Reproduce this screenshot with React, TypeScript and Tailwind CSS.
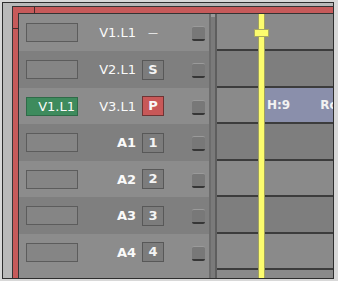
import React from 'react';

type Row = {
  label: string;
  tag: string;
  src?: string;
  dark: boolean;
  bold: boolean;
  h: 'h-[37px]' | 'h-[36px]';
};

const rows: Row[] = [
  { label: 'V1.L1', tag: '—', dark: false, bold: false, h: 'h-[37px]' },
  { label: 'V2.L1', tag: 'S', dark: true, bold: false, h: 'h-[37px]' },
  { label: 'V3.L1', tag: 'P', src: 'V1.L1', dark: false, bold: false, h: 'h-[36px]' },
  { label: 'A1', tag: '1', dark: true, bold: true, h: 'h-[37px]' },
  { label: 'A2', tag: '2', dark: false, bold: true, h: 'h-[36px]' },
  { label: 'A3', tag: '3', dark: true, bold: true, h: 'h-[37px]' },
  { label: 'A4', tag: '4', dark: false, bold: true, h: 'h-[36px]' },
];

function TagBox({ tag }: { tag: string }) {
  if (tag === '—') {
    return <div className="ml-[6px] flex w-[22px] justify-center text-[10px] leading-none text-[#f2f2f2]">—</div>;
  }
  const red = tag === 'P';
  return (
    <div
      className={
        red
          ? 'ml-[6px] flex h-[20px] w-[22px] items-center justify-center border border-[#6e3434] bg-[#c85858] text-[13px] font-bold text-[#f8f8f8]'
          : 'ml-[6px] flex h-[20px] w-[22px] items-center justify-center border border-[#585858] bg-[#7c7c7c] text-[13px] font-bold text-[#f4f4f4]'
      }
    >
      {tag}
    </div>
  );
}

function TrackHeader({ row }: { row: Row }) {
  return (
    <div className={`flex ${row.h} items-center pl-[7px] ${row.dark ? 'bg-[#7f7f7f]' : 'bg-[#8c8c8c]'}`}>
      {row.src ? (
        <div className="flex h-[19px] w-[52px] items-center justify-end border border-[#2f6b48] bg-[#3e8b5d] pr-[2px] text-[13px] leading-none text-[#fafafa]">
          {row.src}
        </div>
      ) : (
        <div className="h-[19px] w-[52px] border border-[#5c5c5c] bg-[#858585]" />
      )}
      <div
        className={`w-[58px] text-right text-[13px] leading-none text-[#fafafa] ${row.bold ? 'font-bold' : 'font-normal'}`}
      >
        {row.label}
      </div>
      <TagBox tag={row.tag} />
      <div className="ml-[28px] mt-[2px] h-[15px] w-[13px] shrink-0 rounded-[2px] border-t border-b-2 border-t-[#9a9a9a] border-b-[#363636] bg-[#787878]" />
    </div>
  );
}

function TimelineRow({ row, index }: { row: Row; index: number }) {
  return (
    <div className={`flex ${row.h} border-b-2 border-[#3c3c3c] ${row.dark ? 'bg-[#7e7e7e]' : 'bg-[#8a8a8a]'}`}>
      {index === 2 && (
        <>
          <div className="w-[48px] shrink-0" />
          <div className="flex min-w-0 flex-1 items-center overflow-hidden whitespace-nowrap bg-[#8a8fab] pl-[2px] text-[12px] font-bold text-[#f2f2f2]">
            <span>H:9</span>
            <span className="ml-[30px]">Ro</span>
          </div>
        </>
      )}
    </div>
  );
}

export default function App() {
  return (
    <div
      className="h-[281px] w-[338px] bg-[#d8d8d8] p-[2px]"
      style={{ fontFamily: '"DejaVu Sans", "Liberation Sans", sans-serif' }}
    >
      <div className="flex h-[277px] w-[332px] flex-col border border-[#2e2e2e] bg-[#b9b9b9] pl-[9px] pt-[3px]">
        <div className="relative flex flex-1 flex-col border-l border-t border-[#333] bg-[#c65a5a] pl-[5px] pt-[6px]">
          <div className="absolute left-[21px] top-0 h-[6px] w-px bg-[#4a2a2a]" />
          <div className="absolute left-0 top-[21px] h-px w-[5px] bg-[#4a2a2a]" />
          <div className="flex flex-1 overflow-hidden border-l border-t border-[#333]">
            <div className="flex w-[190px] shrink-0 flex-col bg-[#8c8c8c]">
              {rows.map((r) => (
                <TrackHeader key={r.label} row={r} />
              ))}
            </div>
            <div className="flex w-[8px] shrink-0 flex-col border-l-2 border-r-2 border-l-[#6c6c6c] border-r-[#5e5e5e] bg-[#7a7a7a]">
              <div className="h-[3px] bg-[#9a9a9a]" />
            </div>
            <div className="relative flex min-w-0 flex-1 flex-col bg-[#8a8a8a]">
              {rows.map((r, i) => (
                <TimelineRow key={r.label} row={r} index={i} />
              ))}
              <div className="absolute bottom-0 left-[41px] top-0 w-[7px] border-x border-[#a0a060] bg-[#fcfc6e]" />
              <div className="absolute left-[37px] top-[15px] h-[8px] w-[15px] border border-[#a8a860] bg-[#fcfc6e]" />
            </div>
          </div>
        </div>
      </div>
    </div>
  );
}
